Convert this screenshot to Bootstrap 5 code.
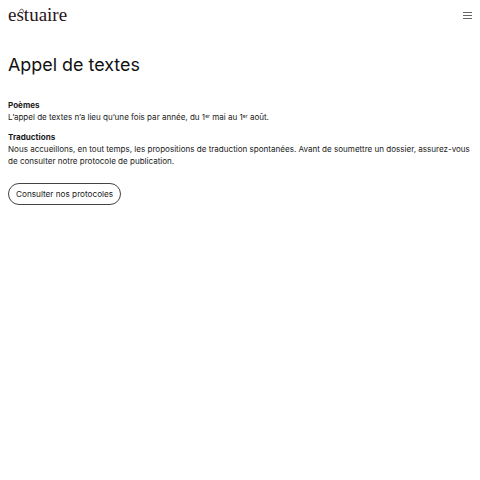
<!DOCTYPE html>
<html lang="fr"><head><meta charset="utf-8">
<link rel="stylesheet" href="https://cdn.jsdelivr.net/npm/bootstrap@5.3.0/dist/css/bootstrap.min.css">
<style>
body{font-family:"Inter","Liberation Sans",sans-serif;font-size:8.05px;line-height:12px;color:#1a1a1a;background:#fff}
.wrap{padding:0 8px}
.logo{font-family:"Liberation Serif",serif;font-size:19px;line-height:20px;color:#2a1518;display:block}
.liga{position:relative;display:inline-block}
.liga svg{position:absolute;left:3px;top:3px;width:8px;height:8px}
.top{height:30px}
.burger{width:9px;height:7px;border-top:1px solid #666;border-bottom:1px solid #666;position:relative}
.burger::after{content:"";position:absolute;left:0;right:0;top:2px;height:1px;background:#666}
.ttl{font-size:17.9px;line-height:24px;font-weight:400;margin:23px 0 22px;color:#111}
.para{margin:0 0 8px}
.para sup{font-size:5px;line-height:0}
.pill{font-size:8.2px;line-height:12px;padding:4px 7px;border:1px solid #444;border-radius:11px;color:#1a1a1a;margin-top:8px;background:#fff}
</style></head><body>
<div class="wrap">
<div class="top d-flex justify-content-between align-items-center"><span class="logo">e<span class="liga">st<svg viewBox="0 0 8 8" fill="none" stroke="#2a1518" stroke-width=".7"><path d="M.4 3.4C1 1.4 2.6 .8 3.6 1.4 4.4 1.9 4.4 3 4.4 4.4"/></svg></span>uaire</span><span class="burger"></span></div>
<h1 class="ttl">Appel de textes</h1>
<p class="para"><b>Poèmes</b><br>L’appel de textes n’a lieu qu’une fois par année, du 1<sup>er</sup> mai au 1<sup>er</sup> août.</p>
<p class="para"><b>Traductions</b><br>Nous accueillons, en tout temps, les propositions de traduction spontanées. Avant de soumettre un dossier, assurez-vous de consulter notre protocole de publication.</p>
<a class="btn pill" href="#">Consulter nos protocoles</a>
</div>
<script src="https://cdn.jsdelivr.net/npm/bootstrap@5.3.0/dist/js/bootstrap.bundle.min.js"></script>
</body></html>
